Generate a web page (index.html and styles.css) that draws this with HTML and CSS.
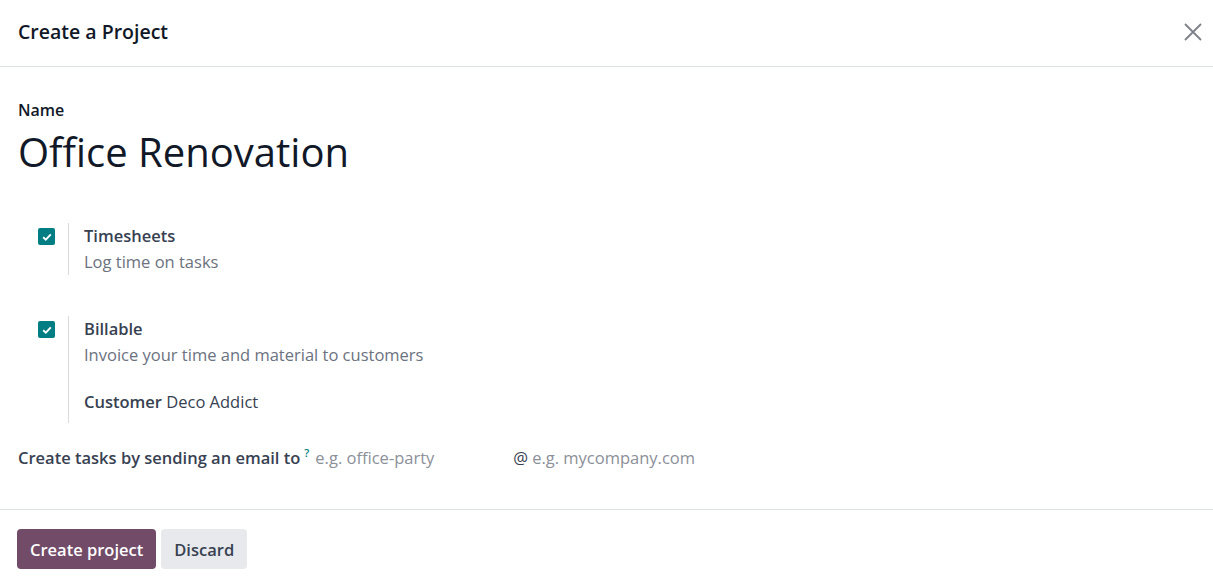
FILE: index.html
```html
<!DOCTYPE html>
<html lang="en">

<head>
  <meta charset="UTF-8">
  <meta name="viewport" content="width=device-width, initial-scale=1.0">
  <title>Create a Project</title>
  <link rel="stylesheet" href="styles.css">
</head>

<body>
  <div class="modal">
    <header class="modal-header">
      <h4 class="modal-title">Create a Project</h4>
      <button type="button" class="btn-close" aria-label="Close">
        <svg width="20" height="20" viewBox="0 0 20 20">
          <path d="M2 2 L18 18 M18 2 L2 18" stroke="#7c8088" stroke-width="1.8" fill="none" />
        </svg>
      </button>
    </header>

    <main class="modal-body">
      <label class="name-label" for="name">Name</label>
      <div class="name-value" id="name">Office Renovation</div>

      <div class="options">
        <div class="option">
          <div class="option-check">
            <span class="checkbox">
              <svg width="10" height="8" viewBox="0 0 10 8">
                <path d="M1.2 4.2 L3.8 6.6 L8.8 1.4" stroke="#fff" stroke-width="1.9" fill="none" />
              </svg>
            </span>
          </div>
          <div class="option-body">
            <div class="option-title">Timesheets</div>
            <div class="option-desc">Log time on tasks</div>
          </div>
        </div>

        <div class="option">
          <div class="option-check">
            <span class="checkbox">
              <svg width="10" height="8" viewBox="0 0 10 8">
                <path d="M1.2 4.2 L3.8 6.6 L8.8 1.4" stroke="#fff" stroke-width="1.9" fill="none" />
              </svg>
            </span>
          </div>
          <div class="option-body">
            <div class="option-title">Billable</div>
            <div class="option-desc">Invoice your time and material to customers</div>
            <div class="customer"><strong>Customer</strong> Deco Addict</div>
          </div>
        </div>
      </div>

      <div class="alias">
        <span class="alias-label">Create tasks by sending an email to<sup class="help">?</sup></span>
        <span class="alias-name">e.g. office-party</span>
        <span class="alias-at">@</span>
        <span class="alias-domain">e.g. mycompany.com</span>
      </div>
    </main>

    <footer class="modal-footer">
      <button type="button" class="btn btn-primary">Create project</button>
      <button type="button" class="btn btn-secondary">Discard</button>
    </footer>
  </div>
</body>

</html>
```

FILE: styles.css
```css
body {
  font-family: "Open Sans", "Noto Sans", sans-serif;
  font-size: 16.5px;
  color: #1f2937;
  background-color: #fff;
  margin: 0;
  padding: 0;
}

.modal {
  width: 1213px;
  height: 586px;
  display: flex;
  flex-direction: column;
}

/* Header */
.modal-header {
  height: 67px;
  box-sizing: border-box;
  border-bottom: 1px solid #dee2e6;
  display: flex;
  align-items: center;
  justify-content: space-between;
  padding: 0 8px 3px 18px;
}

.modal-title {
  margin: 0;
  font-size: 19.5px;
  font-weight: 600;
  color: #111827;
}

.btn-close {
  background: none;
  border: none;
  padding: 0;
  width: 24px;
  height: 24px;
  display: flex;
  align-items: center;
  justify-content: center;
  cursor: pointer;
}

/* Body */
.modal-body {
  padding: 31px 18px 0;
  flex: 1;
}

.name-label {
  display: block;
  font-weight: 600;
  font-size: 16px;
  color: #111827;
  line-height: 24px;
}

.name-value {
  font-size: 40px;
  color: #111827;
  line-height: 56px;
  padding-top: 2px;
  margin-bottom: 43px;
}

.options {
  padding-left: 20px;
}

.option {
  display: flex;
  margin-bottom: 41px;
}

.option-check {
  width: 30px;
  padding-top: 5px;
  border-right: 1px solid #d8dadd;
}

.checkbox {
  display: flex;
  align-items: center;
  justify-content: center;
  width: 17px;
  height: 17px;
  background-color: #017e84;
  border-radius: 2px;
}

.option-body {
  padding-left: 15px;
}

.option-title {
  font-weight: 600;
  color: #374151;
  line-height: 26px;
}

.option-desc {
  color: #6b7280;
  line-height: 26px;
}

.customer {
  margin-top: 21px;
  padding-bottom: 8px;
  line-height: 26px;
  color: #374151;
}

.customer strong {
  font-weight: 600;
}

.alias {
  display: flex;
  align-items: baseline;
  margin-top: -24px;
  line-height: 26px;
}

.alias-label {
  font-weight: 600;
  color: #374151;
}

.help {
  color: #017e84;
  font-size: 11px;
  margin-left: 4px;
  margin-right: 6px;
}

.alias-name {
  color: #8b9099;
  width: 198px;
}

.alias-at {
  color: #374151;
  margin-right: 4px;
}

.alias-domain {
  color: #8b9099;
}

/* Footer */
.modal-footer {
  border-top: 1px solid #dee2e6;
  padding: 19px 17px 17px;
  display: flex;
  gap: 5px;
}

.btn {
  height: 40px;
  padding: 0 13px;
  border: none;
  border-radius: 4px;
  font-family: inherit;
  font-size: 16.5px;
  font-weight: 600;
  cursor: pointer;
}

.btn-primary {
  background-color: #714b67;
  color: #fff;
}

.btn-secondary {
  background-color: #e7e9ed;
  color: #374151;
}
```
